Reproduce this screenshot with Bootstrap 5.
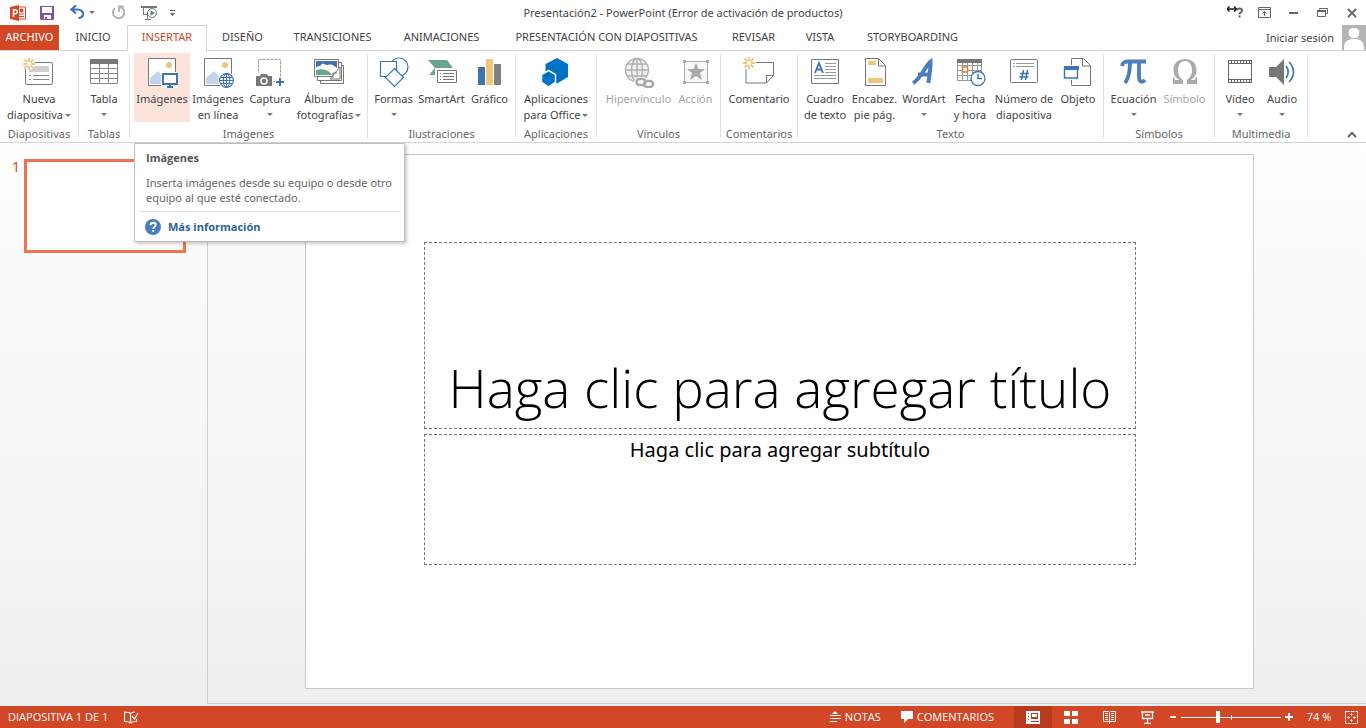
<!DOCTYPE html>
<html lang="es">
<head>
<meta charset="utf-8">
<meta name="viewport" content="width=device-width, initial-scale=1">
<title>Presentación2 - PowerPoint</title>
<link href="https://cdn.jsdelivr.net/npm/bootstrap@5.3.0/dist/css/bootstrap.min.css" rel="stylesheet">
<style>
:root{--brand:#d24726;--line:#d4d4d4;--ink:#444;--blue:#4a7ebb;--gray:#777;--gold:#eec77d}
body{font-family:"Noto Sans","Open Sans",sans-serif;font-size:11px;line-height:16px;color:var(--ink);background:#fff;overflow:hidden}
button{font:inherit;color:inherit;background:none;border:0;padding:0}
svg{display:block;flex:none}
.titlebar{display:grid;grid-template-columns:1fr auto 1fr;height:25px;align-items:center}
.wbtn{width:29px;height:22px;display:flex;align-items:center;justify-content:center}
.tabs{height:26px;border-bottom:1px solid var(--line)}
.tabs a{height:25px;line-height:24px;text-align:center;text-decoration:none;color:var(--ink);white-space:nowrap;flex:none}
.tabs .file{background:var(--brand);color:#fff;width:59px}
.tabs .current{color:var(--brand);border:1px solid var(--line);border-bottom:0;height:26px;background:#fff;line-height:22px}
.t60{width:60px}.t68{width:68px}.t70{width:71px}.t73{width:73px}.t80{width:80px}.t110{width:109px}.t125{width:125px}.t220{width:221px}
.account{height:25px}
.ribbon{height:92px;border-bottom:1px solid var(--line);position:relative}
.rgroup{display:flex;flex-direction:column;flex:none;position:relative;padding:2px 1px 0 0}
.rgroup::after{content:"";position:absolute;right:0;top:3px;bottom:4px;width:1px;background:#e0e0e0}
.rgroup h2{font-size:11px;line-height:16px;font-weight:400;color:#666;text-align:center;margin:4px 0 0;white-space:nowrap}
.rb{display:flex;flex-direction:column;align-items:center;height:69px;padding-top:3px;flex:none;white-space:nowrap}
.rb svg.ic{width:32px;height:32px;margin-bottom:3px}
.rb .caret{margin-top:6px}
.rb .l2{display:flex;align-items:center;gap:2px}
.rb:disabled{color:#a6a6a6}
.rb.hot{background:#fce4dd}
.w40{width:40px}.w42{width:42px}.w44{width:44px}.w48{width:48px}.w51{width:51px}.w56{width:56px}.w64{width:64px}.w70{width:70px}.w74{width:74px}.w78{width:78px}
.g79{width:79px}.g51{width:51px}.g238{width:238px}.g148{width:148px}.g81{width:81px}.g124{width:124px}.g77{width:77px}.g306{width:306px}.g111{width:111px}.g93{width:93px}
.collapse-btn{position:absolute;right:9px;bottom:4px}
.work{display:grid;grid-template-columns:208px 1fr;flex:1;min-height:0;background:linear-gradient(#fefefe,#efefef)}
.thumbs{border-right:1px solid #cfcfcf;padding:16px 21px 0 12px;gap:4px;margin-bottom:2px}
.thumbs span{color:var(--brand);font-size:14px;width:8px;line-height:16px}
.thumb{flex:1;height:94px;background:#fff;border:3px solid #f07355}
.stage{padding:11px 112px 0 97px;border-bottom:1px solid #cfcfcf;margin-bottom:2px}
.slide{aspect-ratio:949/535;background:#fff;border:1px solid #c8c8c8;display:flex;flex-direction:column;align-items:stretch;padding:87px 10.1% 0 10.2%;gap:5px;padding-left:118px;padding-right:117px}
.ph{border:1px dashed #777;color:#000;text-align:center}
.ph h1{font-family:"Open Sans",sans-serif;font-weight:300;font-size:53px;line-height:60px;margin:0;white-space:nowrap}
.ph p{font-size:20px;line-height:30px;margin:0}
.ph-title{height:187px;display:flex;align-items:flex-end;justify-content:center;padding-bottom:10px}
.ph-sub{height:131px}
.tip{position:absolute;left:134px;top:143px;width:271px;height:99px;background:#fff;border:1px solid #bebebe;box-shadow:2px 2px 3px #0003;z-index:5;color:#666}
.tip h3{font-family:"Open Sans",sans-serif;font-size:11px;line-height:16px;font-weight:700;margin:6px 11px 9px;color:#555}
.tip p{line-height:15px;margin:0 11px 6px;white-space:nowrap}
.tip .more{margin:0 4px;padding:7px 0 0 6px;border-top:1px solid #e1e1e1;gap:7px}
.tip a{font-family:"Open Sans",sans-serif;color:#2a6496;font-weight:700;text-decoration:none}
.status{height:22px;background:var(--brand);color:#fff;flex:none;font-family:"Open Sans",sans-serif}
.view{width:38px;height:22px;display:flex;align-items:center;justify-content:center}
.view.on{background:#b83b1d}
.zoomer{width:100px;height:22px;position:relative}
.zoomer::after{content:"";position:absolute;left:50px;top:9px;width:1px;height:5px;background:#fff}
.zoomer input{appearance:none;-webkit-appearance:none;width:100px;height:22px;margin:0;display:block;background:linear-gradient(#fff,#fff) 0 11px/100% 1px no-repeat}
.zoomer input::-webkit-slider-thumb{-webkit-appearance:none;width:4px;height:12px;background:#fff;border:0}
.zoomer input::-moz-range-thumb{width:4px;height:12px;background:#fff;border:0;border-radius:0}
</style>
</head>
<body class="d-flex flex-column vh-100">
<svg width="0" height="0" class="position-absolute"><defs>
<symbol id="dn" viewBox="0 0 6 3"><path d="M0 0h6L3 3z" fill="#777"/></symbol>
<symbol id="spark" viewBox="0 0 12 12"><path d="M6 0v12M0 6h12M1.500 1.500l9 9M10.500 1.500l-9 9" stroke="#eec77d" stroke-width="1.800"/><circle cx="6" cy="6" r="2.200" fill="#fff"/></symbol>
</defs></svg>

<header class="titlebar">
 <div class="d-flex align-items-center">
  <button aria-label="PowerPoint" class="ms-2 me-1"><svg width="20" height="18" viewBox="0 0 20 18"><path d="M9 3h8.500v12H9" fill="#fff" stroke="#d24726"/><path d="M11 10h5M11 12.500h5" stroke="#d24726"/><circle cx="13.500" cy="6.500" r="2" fill="#d24726"/><path d="M2 3l9-2v16l-9-2z" fill="#d24726"/><path d="M5.500 13V5.700h1.700a1.900 1.900 0 0 1 0 4H5.500" fill="none" stroke="#fff" stroke-width="1.500"/></svg></button>
  <button aria-label="Guardar" class="ms-2"><svg width="14" height="14"><path d="M0 0h14v14H1l-1-1z" fill="#8552a1"/><path d="M2 1h10v6H2zM4 9h7v4H7v-2H5v2H4z" fill="#fff"/></svg></button>
  <button aria-label="Deshacer" class="ms-3 d-flex align-items-center gap-1"><svg width="15" height="15" viewBox="0 0 15 15"><path d="M6 .5L1.500 4.500L6 8.500M2 4.500h5c4 0 6.500 2 6 5c-.4 2-2 3.500-4.500 3.500" fill="none" stroke="#3f74b3" stroke-width="2.200"/></svg><svg width="6" height="3"><use href="#dn"/></svg></button>
  <button aria-label="Rehacer" class="ms-3"><svg width="14" height="15" viewBox="0 0 14 15"><path d="M9 2A5.700 5.700 0 1 1 4 3.200" fill="none" stroke="#b4b4b4" stroke-width="2"/><path d="M8 7V1.500h5" fill="none" stroke="#b4b4b4" stroke-width="2"/></svg></button>
  <button aria-label="Presentación desde el principio" class="ms-3"><svg width="17" height="16" viewBox="0 0 17 16"><path d="M0 1h16v2H0zM2 3h1v6h4v1H2zM4 14h6v1H4zM6 10h1v4H6z" fill="#777"/><circle cx="11" cy="8" r="4.500" fill="#fff" stroke="#777"/><path d="M9.500 5.300L14 8l-4.500 2.700z" fill="#439467"/></svg></button>
  <button aria-label="Personalizar barra" class="ms-2 ps-1"><svg width="6" height="6"><path d="M0 0h5v1H0zM0 3h5L2.500 6z" fill="#666"/></svg></button>
 </div>
 <div class="text-center">Presentación2 - PowerPoint (Error de activación de productos)</div>
 <div class="d-flex justify-content-end pe-0">
  <button class="wbtn" aria-label="Ayuda"><svg width="18" height="14" viewBox="0 0 18 14"><path d="M0 3h9M2.500.5L0 3l2.500 2.500M7 .5L9.500 3L7 5.500" fill="none" stroke="#222" stroke-width="1.500"/><path d="M10 4.500c0-3 5-2.500 5 0c0 2-2.500 1.700-2.500 3.500v.5M12.500 9.500v2" fill="none" stroke="#666" stroke-width="2"/></svg></button>
  <button class="wbtn" aria-label="Opciones de cinta"><svg width="13" height="11"><path d="M.5.500h12v10H.5zM.5 2.500h12M6.500 9V4.500M4.500 6.500l2-2l2 2" fill="none" stroke="#666"/></svg></button>
  <button class="wbtn" aria-label="Minimizar"><svg width="9" height="2"><path d="M0 0h9v2H0z" fill="#666"/></svg></button>
  <button class="wbtn" aria-label="Restaurar"><svg width="11" height="9"><path d="M2.500 2V.5h8v5H8M.5 3h8v5.500h-8z" fill="none" stroke="#666"/><path d="M0 2h9v2H0z" fill="#666"/></svg></button>
  <button class="wbtn" aria-label="Cerrar"><svg width="10" height="10"><path d="M1 1l8 8M9 1L1 9" stroke="#666" stroke-width="1.800"/></svg></button>
 </div>
</header>

<nav class="tabs d-flex">
 <a href="#" class="file">ARCHIVO</a><a href="#" class="t68">INICIO</a><a href="#" class="t80 current">INSERTAR</a><a href="#" class="t70">DISEÑO</a><a href="#" class="t110">TRANSICIONES</a><a href="#" class="t110">ANIMACIONES</a><a href="#" class="t220">PRESENTACIÓN CON DIAPOSITIVAS</a><a href="#" class="t73">REVISAR</a><a href="#" class="t60">VISTA</a><a href="#" class="t125">STORYBOARDING</a>
 <button class="account ms-auto d-flex align-items-center gap-2"><span>Iniciar sesión</span><svg width="24" height="25"><path d="M0 0h24v25H0z" fill="#b5b5b5"/><path d="M12 3c6 0 6 4 4.500 8c-1 3-8 3-9 0C6 7 6 3 12 3zM2 25c0-9 2-9 7-11h6c5 2 7 2 7 11z" fill="#fff"/></svg></button>
</nav>

<section class="ribbon d-flex">
 <div class="rgroup g79"><div class="d-flex justify-content-center">
  <button class="rb w78"><svg class="ic" viewBox="0 0 32 32"><rect x="2.500" y="6.500" width="27" height="22" rx="1.500" fill="#fff" stroke="#777"/><path d="M6 10h20v6H6z" fill="#d0d0d0"/><path d="M6 19.500h2m2 0h16M6 23.500h2m2 0h16" stroke="#888"/><circle cx="6" cy="8" r="6" fill="#fff"/><use href="#spark" x="0" y="2" width="12" height="12"/></svg><span>Nueva</span><span class="l2">diapositiva <svg width="6" height="3"><use href="#dn"/></svg></span></button>
 </div><h2>Diapositivas</h2></div>
 <div class="rgroup g51"><div class="d-flex justify-content-center">
  <button class="rb w48"><svg class="ic" viewBox="0 0 32 32"><path d="M2.500 3.500h27v24h-27zM2.500 12.500h27M2.500 17.500h27M2.500 22.500h27M11.500 7v20M20.500 7v20" fill="none" stroke="#888"/><path d="M2 3h28v5H2z" fill="#777"/></svg><span>Tabla</span><svg class="caret" width="6" height="3"><use href="#dn"/></svg></button>
 </div><h2>Tablas</h2></div>
 <div class="rgroup g238"><div class="d-flex ps-1">
  <button class="rb w56 hot"><svg class="ic" viewBox="0 0 32 32"><path d="M2.500 2.500h27v27h-27z" fill="#fff" stroke="#777"/><circle cx="23" cy="9" r="3" fill="#eec77d"/><path d="M4 28V22l8-7l8 8v5z" fill="#c1d5ea"/><path d="M15 16h17v16H15z" fill="#fff"/><path d="M17 18h14v10H17z" fill="#fff" stroke="#3f74b3" stroke-width="2"/><path d="M23 28h2v2h2v2h-6v-2h2z" fill="#3f74b3"/></svg><span>Imágenes</span></button>
  <button class="rb w56"><svg class="ic" viewBox="0 0 32 32"><path d="M2.500 2.500h27v27h-27z" fill="#fff" stroke="#777"/><circle cx="23" cy="9" r="3" fill="#eec77d"/><path d="M4 28V22l8-7l8 8v5z" fill="#c1d5ea"/><circle cx="24.500" cy="24.500" r="8.500" fill="#fff"/><g fill="#fff" stroke="#3f74b3" stroke-width="1.100"><circle cx="24.500" cy="24.500" r="6.900"/><ellipse cx="24.500" cy="24.500" rx="3.200" ry="6.900" fill="none"/><path d="M18 24.500h13M24.500 18v13M19 21.500h11M19 27.500h11"/></g></svg><span>Imágenes</span><span>en línea</span></button>
  <button class="rb w48"><svg class="ic" viewBox="0 0 32 32"><path d="M4.500 3.500h22v22h-22z" fill="none" stroke="#999" stroke-dasharray="3 1"/><path d="M1 17h18v14H1V18z" fill="#fff"/><path d="M2 20h4l1-2h6l1 2h4v10H2z" fill="#777"/><circle cx="10" cy="25" r="3" fill="#777" stroke="#fff" stroke-width="1.500"/><path d="M21 21h9v9h-9z" fill="#fff"/><path d="M26 22v8M22 26h8" stroke="#3f74b3" stroke-width="2"/></svg><span>Captura</span><svg class="caret" width="6" height="3"><use href="#dn"/></svg></button>
  <button class="rb w70"><svg class="ic" viewBox="0 0 32 32"><path d="M7 9.500h23.500v18H7.500v-5" fill="#fff" stroke="#777"/><path d="M5 6.500h23.500v18H4.500v-4" fill="#fff" stroke="#777"/><path d="M1.500 3.500h24v17h-24z" fill="#fff" stroke="#777"/><path d="M3 5h21v7H3z" fill="#3f74b3"/><path d="M3 12c2-3 4-1 5-3c2-3 5 1 7 0c3-1 5 0 6 1l3 2v2H3z" fill="#fff"/><path d="M3 14c6-2 13 0 16 5H3z" fill="#6aa58d"/><path d="M27 11l-10 12h10z" fill="#fff" stroke="#777"/><path d="M20 22v-5h4" fill="none" stroke="#777"/></svg><span>Álbum de</span><span class="l2">fotografías <svg width="6" height="3"><use href="#dn"/></svg></span></button>
 </div><h2>Imágenes</h2></div>
 <div class="rgroup g148"><div class="d-flex justify-content-center">
  <button class="rb w48"><svg class="ic" viewBox="0 0 32 32"><g fill="#fff" stroke="#3f74b3" stroke-width="1.200"><circle cx="21" cy="11" r="9"/><path d="M2.500 5.500h16v15h-16z"/><path d="M16.500 12.500l9 9l-9 9l-9-9z"/></g></svg><span>Formas</span><svg class="caret" width="6" height="3"><use href="#dn"/></svg></button>
  <button class="rb w48"><svg class="ic" viewBox="0 0 32 32"><path d="M2 4h19l6 8l-6 7H3l6-7z" fill="#6aa58d"/><path d="M9 12h22v17H9z" fill="#fff"/><path d="M11.500 14.500h19v12h-19z" fill="#fff" stroke="#777"/><path d="M14 17.500h1m2 0h11M14 20.500h1m2 0h11M14 23.500h1m2 0h11" stroke="#777"/></svg><span>SmartArt</span></button>
  <button class="rb w48"><svg class="ic" viewBox="0 0 32 32"><path d="M4 11h7v18H4z" fill="#3f74b3"/><path d="M12 3h7v26h-7z" fill="#eec77d"/><path d="M20 8h7v21h-7z" fill="#808080"/></svg><span>Gráfico</span></button>
 </div><h2>Ilustraciones</h2></div>
 <div class="rgroup g81"><div class="d-flex justify-content-center">
  <button class="rb w78"><svg class="ic" viewBox="0 0 32 32"><path d="M17 2l11 6v13l-11 6.500L5.500 21V8z" fill="#0072c6"/><path d="M8.500 14.500l7 4v8l-7 4.500l-7-4.500v-8z" fill="#0072c6" stroke="#fff" stroke-width="1.500"/></svg><span>Aplicaciones</span><span class="l2">para Office <svg width="6" height="3"><use href="#dn"/></svg></span></button>
 </div><h2>Aplicaciones</h2></div>
 <div class="rgroup g124"><div class="d-flex justify-content-center">
  <button class="rb w74" disabled><svg class="ic" viewBox="0 0 32 32"><g fill="#f4eff4" stroke="#b3b0b3" stroke-width="1.400"><circle cx="14" cy="14" r="11.500"/><ellipse cx="14" cy="14" rx="5.500" ry="11.500"/><path d="M14 2.500v23M2.500 14h23M4 8h20M4 20h20"/></g><g fill="none" stroke="#fff" stroke-width="5"><rect x="13.500" y="23.500" width="9" height="6" rx="3"/><rect x="21.500" y="25" width="9" height="6" rx="3"/></g><g fill="none" stroke="#aaa" stroke-width="2.500"><rect x="13.500" y="23" width="9" height="6" rx="3"/><rect x="21" y="25" width="9" height="6" rx="3"/></g></svg><span>Hipervínculo</span></button>
  <button class="rb w40" disabled><svg class="ic" viewBox="0 0 32 32"><path d="M4.500 5.500h23v21h-23z" fill="#faf6fa" stroke="#b0adb0"/><path d="M3 4h3v3H3zM26 4h3v3h-3zM3 25h3v3H3zM26 25h3v3h-3z" fill="#aaa"/><path d="M16 7l2.500 6H25l-5 4l2 7l-6-4l-6 4l2-7l-5-4h6.500z" fill="#aaa"/></svg><span>Acción</span></button>
 </div><h2>Vínculos</h2></div>
 <div class="rgroup g77"><div class="d-flex justify-content-center">
  <button class="rb w74"><svg class="ic" viewBox="0 0 32 32"><path d="M13 6.500h17.500v13l-7 7.500h-20.500V13" fill="none" stroke="#777"/><path d="M23.500 27v-7.500h7" fill="none" stroke="#777"/><use href="#spark" x="0" y="1" width="12" height="12"/></svg><span>Comentario</span></button>
 </div><h2>Comentarios</h2></div>
 <div class="rgroup g306"><div class="d-flex justify-content-center">
  <button class="rb w48"><svg class="ic" viewBox="0 0 32 32"><path d="M2.500 3.500h27v24h-27z" fill="#fff" stroke="#777"/><path d="M16 7.500h11M16 10.500h11M16 13.500h11M16 16.500h11M5 19.500h22M5 22.500h22" stroke="#999"/><path d="M6 17l4-10l4 10M7.500 13.500h5" fill="none" stroke="#3f74b3" stroke-width="1.800"/></svg><span>Cuadro</span><span>de texto</span></button>
  <button class="rb w51"><svg class="ic" viewBox="0 0 32 32"><path d="M6.500 2.500h13l7 7v20h-20z" fill="#fff" stroke="#777"/><path d="M19.500 3v7H26" fill="none" stroke="#777"/><path d="M9 5h8v4H9zM9 22h15v5H9z" fill="#eec77d"/></svg><span>Encabez.</span><span>pie pág.</span></button>
  <button class="rb w48"><svg class="ic" viewBox="0 0 32 32"><path d="M5 27C12 24 18 9 22.500 5.500C23 12 21 20 20.500 27M10 18.500h12" fill="none" stroke="#4a7fbb" stroke-width="4"/></svg><span>WordArt</span><svg class="caret" width="6" height="3"><use href="#dn"/></svg></button>
  <button class="rb w44"><svg class="ic" viewBox="0 0 32 32"><path d="M3.500 4.500h24v20h-24zM3.500 9.500h24M3.500 14.500h24M3.500 19.500h24M8.500 7v17M13.500 7v17M18.500 7v17M23.500 7v17" fill="none" stroke="#999"/><path d="M3 3h25v4H3z" fill="#777"/><path d="M8.500 11h5v5h-5z" fill="#fff" stroke="#e47b3a" stroke-width="1.500"/><circle cx="24" cy="22.500" r="7" fill="#fff" stroke="#3f74b3" stroke-width="1.300"/><path d="M24 18v4.500h4" fill="none" stroke="#3f74b3" stroke-width="1.500"/></svg><span>Fecha</span><span>y hora</span></button>
  <button class="rb w64"><svg class="ic" viewBox="0 0 32 32"><rect x="2.500" y="3.500" width="27" height="23" rx="1" fill="#fff" stroke="#777"/><path d="M5 7.500h2m1 0h18M5 10.500h2m1 0h18" stroke="#999"/><path d="M15.500 14l-2 10M19.500 14l-2 10M12 17.500h9M11.500 21h9" stroke="#3f74b3" stroke-width="1.500"/></svg><span>Número de</span><span>diapositiva</span></button>
  <button class="rb w44"><svg class="ic" viewBox="0 0 32 32"><path d="M9.500 2.500h12l7 7v20h-19z" fill="#fff" stroke="#777"/><path d="M20.500 3v7H28" fill="none" stroke="#777"/><path d="M1 9h17v15H1z" fill="#fff"/><path d="M2.500 11h13v11h-13z" fill="#fff" stroke="#3f74b3" stroke-width="1.400"/><path d="M2 10h15v4H2z" fill="#3f74b3"/></svg><span>Objeto</span></button>
 </div><h2>Texto</h2></div>
 <div class="rgroup g111"><div class="d-flex justify-content-center">
  <button class="rb w51"><svg class="ic" viewBox="0 0 32 32"><path d="M4 10c1-4 3-4.500 6-4.500h18M12 6c0 10-1 16-5 21M21 6v15c0 5 3 6 6 3" fill="none" stroke="#4a7fbb" stroke-width="3.800"/></svg><span>Ecuación</span><svg class="caret" width="6" height="3"><use href="#dn"/></svg></button>
  <button class="rb w51" disabled><svg class="ic" viewBox="0 0 32 32"><path d="M16 3C8 3 4.500 8 4.500 14c0 5 2.500 8 6 10H6l-1-3H4v7h10v-4c-3-2-5-5-5-10c0-5 2.500-9 7-9s7 4 7 9c0 5-2 8-5 10v4h10v-7h-1l-1 3h-4.500c3.500-2 6-5 6-10C27.500 8 24 3 16 3z" fill="#aaa"/></svg><span>Símbolo</span></button>
 </div><h2>Símbolos</h2></div>
 <div class="rgroup g93"><div class="d-flex justify-content-center">
  <button class="rb w42"><svg class="ic" viewBox="0 0 32 32"><path d="M4.500 4.500h23v22h-23z" fill="#fff" stroke="#666"/><path d="M4 4h24v4H4zM4 23h24v4H4z" fill="#666"/><path d="M5 6h22M5 25h22" stroke="#fff" stroke-width="2" stroke-dasharray="2 1"/></svg><span>Vídeo</span><svg class="caret" width="6" height="3"><use href="#dn"/></svg></button>
  <button class="rb w42"><svg class="ic" viewBox="0 0 32 32"><path d="M3 11h7l8-8v26l-8-8H3z" fill="#777"/><path d="M20 10c3 4 3 8 0 12M23 6c6 6 6 14 0 20" fill="none" stroke="#3f74b3" stroke-width="1.700"/></svg><span>Audio</span><svg class="caret" width="6" height="3"><use href="#dn"/></svg></button>
 </div><h2>Multimedia</h2></div>
 <button class="collapse-btn" aria-label="Contraer cinta"><svg width="10" height="7"><path d="M1 6l4-4l4 4" fill="none" stroke="#666" stroke-width="2"/></svg></button>
</section>

<div class="tip" role="tooltip">
 <h3>Imágenes</h3>
 <p>Inserta imágenes desde su equipo o desde otro<br>equipo al que esté conectado.</p>
 <div class="more d-flex align-items-center"><svg width="16" height="16"><circle cx="8" cy="8" r="8" fill="#4a7ebb"/><path d="M5.500 6.300c0-3.400 5.200-3.200 5.200-.2c0 1.700-2.500 1.900-2.500 3.900M8.200 11v2" fill="none" stroke="#fff" stroke-width="1.900"/></svg><a href="#">Más información</a></div>
</div>

<main class="work">
 <aside class="thumbs d-flex align-items-start"><span>1</span><div class="thumb"></div></aside>
 <section class="stage"><div class="slide">
  <div class="ph ph-title"><h1>Haga clic para agregar título</h1></div>
  <div class="ph ph-sub"><p>Haga clic para agregar subtítulo</p></div>
 </div></section>
</main>

<footer class="status d-flex align-items-center">
 <span class="ms-2">DIAPOSITIVA 1 DE 1</span>
 <button class="ms-3" aria-label="Revisión"><svg width="15" height="13" viewBox="0 0 15 13"><path d="M6.500 2.500C5 1 3 1 .5 1v9.500c3 0 4.500 0 6 1.500c1.500-1.500 3-1.500 6-1.500V8M6.500 2.500V12M6.500 2.500C8 1 9 1 11 1M8 5l2.500 3L14 2" fill="none" stroke="#fff" stroke-width="1.200"/></svg></button>
 <button class="ms-auto d-flex align-items-center gap-1"><svg width="12" height="12"><path d="M6 0l3 3H3zM1 4h11v1H1zM1 7h11v1H1zM1 10h7v1H1z" fill="#fff"/></svg>NOTAS</button>
 <button class="mx-3 px-1 d-flex align-items-center gap-1"><svg width="12" height="12"><path d="M0 0h12v8H7l-4 4V8H0z" fill="#fff"/></svg>COMENTARIOS</button>
 <button class="view on" aria-label="Normal"><svg width="14" height="13"><path d="M0 0h14v13H0z" fill="#fff"/><path d="M2 2h1v1H2zM2 5h1v1H2zM2 8h1v1H2zM5 2h7v6H5zM5 10h8v1H5z" fill="#b83b1d"/><path d="M6 3h5v3H6z" fill="#fff"/></svg></button>
 <button class="view" aria-label="Clasificador"><svg width="14" height="13"><path d="M0 0h6v5H0zM8 0h6v5H8zM0 8h6v5H0zM8 8h6v5H8z" fill="#fff"/></svg></button>
 <button class="view" aria-label="Lectura"><svg width="13" height="13"><path d="M.5.500h5l1 1l1-1h5v10h-5l-1 1l-1-1h-5zM6.500 1v12M2 2.500h3M2 4.500h3M2 6.500h3M2 8.500h3M8 2.500h3M8 4.500h3M8 6.500h3M8 8.500h3" fill="none" stroke="#fff"/></svg></button>
 <button class="view" aria-label="Presentación"><svg width="13" height="13"><path d="M0 1h13M1.500 1v6.500h10V1M4 4h5M6.500 8v4M3 12.500h7" fill="none" stroke="#fff" stroke-width="1.300"/></svg></button>
 <button class="px-1" aria-label="Alejar"><svg width="7" height="8"><path d="M0 3h6v2H0z" fill="#fff"/></svg></button>
 <label class="zoomer"><input type="range" min="0" max="100" value="36" aria-label="Zoom"></label>
 <button class="px-1" aria-label="Acercar"><svg width="8" height="8"><path d="M3 0h2v3h3v2H5v3H3V5H0V3h3z" fill="#fff"/></svg></button>
 <button class="w44">74 %</button>
 <button class="px-1 me-1" aria-label="Ajustar"><svg width="13" height="13"><path d="M.5.500h12v12H.5z" fill="none" stroke="#fff" stroke-dasharray="4 1"/><path d="M6.500 2v3M6.500 8v3M2 6.500h3M8 6.500h3M5.500 3.500h2M5.500 9.500h2M3.500 5.500v2M9.500 5.500v2" stroke="#fff"/></svg></button>
</footer>
<script src="https://cdn.jsdelivr.net/npm/bootstrap@5.3.0/dist/js/bootstrap.bundle.min.js"></script>
</body>
</html>
